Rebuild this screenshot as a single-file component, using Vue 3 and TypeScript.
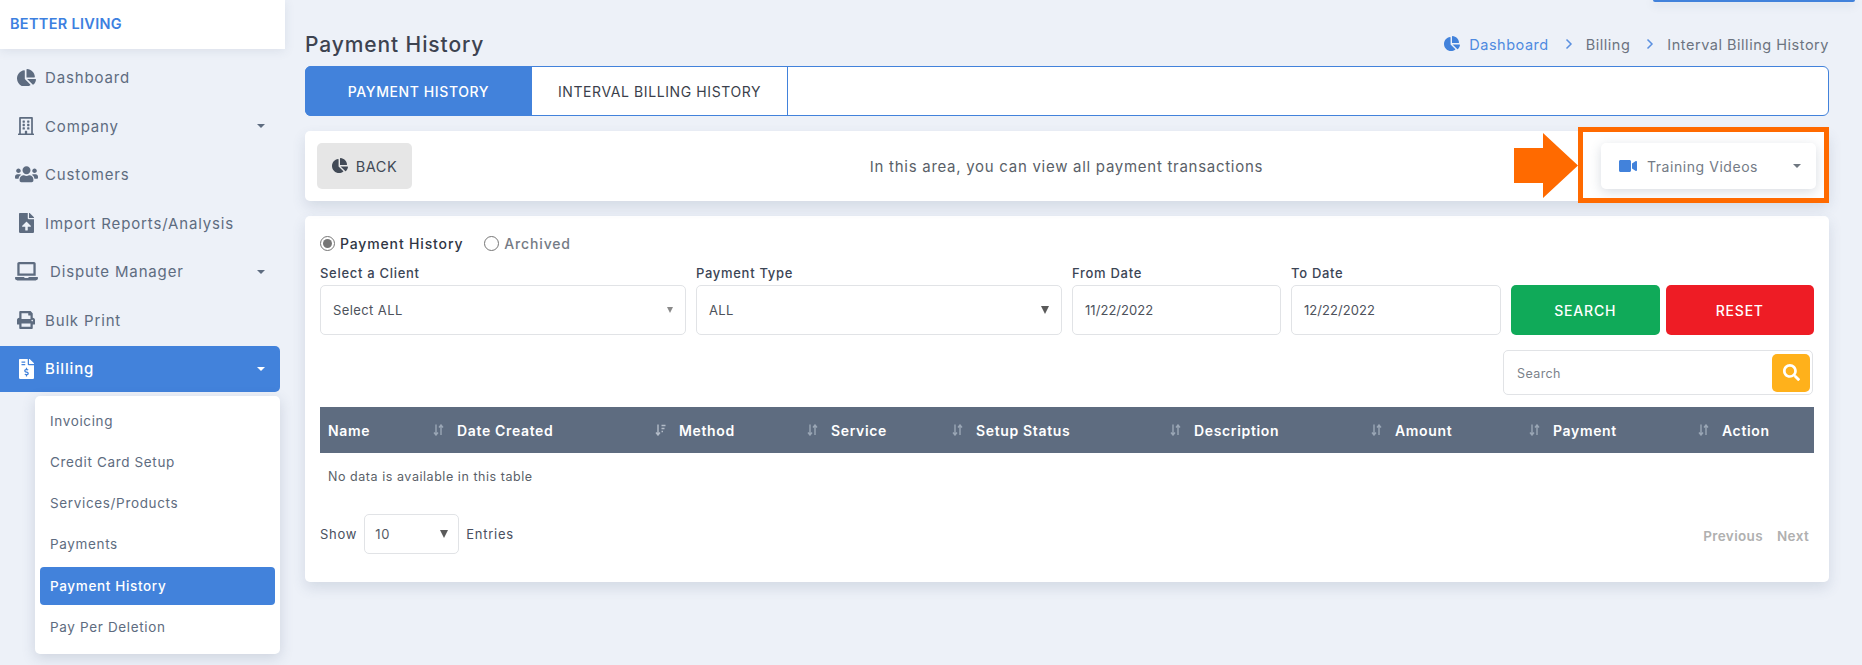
<script setup lang="ts">
type IconDef = { vb: string; d: string }
const icons: Record<string, IconDef> = {
  pie: { vb: '0 0 544 512', d: 'M527.79 288H290.5l158.03 158.03c6.04 6.04 15.98 6.53 22.19.68 38.7-36.46 65.32-85.61 73.13-140.86 1.34-9.46-6.51-17.85-16.06-17.85zm-15.83-64.8C503.72 103.74 408.26 8.28 288.8.04 279.68-.59 272 7.1 272 16.24V240h223.77c9.14 0 16.82-7.68 16.19-16.8zM224 288V50.71c0-9.55-8.39-17.4-17.84-16.06C86.99 51.49-4.1 155.6.14 280.37 4.5 408.51 114.83 513.59 243.03 511.98c50.4-.63 96.97-16.87 135.26-44.03 7.9-5.6 8.42-17.23 1.57-24.08L224 288z' },
  building: { vb: '0 0 448 512', d: 'M128 148v-40c0-6.6 5.4-12 12-12h40c6.6 0 12 5.4 12 12v40c0 6.6-5.4 12-12 12h-40c-6.6 0-12-5.4-12-12zm140 12h40c6.6 0 12-5.4 12-12v-40c0-6.6-5.4-12-12-12h-40c-6.6 0-12 5.4-12 12v40c0 6.6 5.4 12 12 12zm-128 96h40c6.6 0 12-5.4 12-12v-40c0-6.6-5.4-12-12-12h-40c-6.6 0-12 5.4-12 12v40c0 6.6 5.4 12 12 12zm128 0h40c6.6 0 12-5.4 12-12v-40c0-6.6-5.4-12-12-12h-40c-6.6 0-12 5.4-12 12v40c0 6.6 5.4 12 12 12zm-76 84v-40c0-6.6-5.4-12-12-12h-40c-6.6 0-12 5.4-12 12v40c0 6.6 5.4 12 12 12h40c6.6 0 12-5.4 12-12zm76 12h40c6.6 0 12-5.4 12-12v-40c0-6.6-5.4-12-12-12h-40c-6.6 0-12 5.4-12 12v40c0 6.6 5.4 12 12 12zm180 124v36H0v-36c0-6.6 5.4-12 12-12h19.5V24c0-13.3 10.7-24 24-24h337c13.3 0 24 10.7 24 24v440H436c6.6 0 12 5.4 12 12zM79.5 463H192v-67c0-6.6 5.4-12 12-12h40c6.6 0 12 5.4 12 12v67h112.5V49L80 48l-.5 415z' },
  users: { vb: '0 0 640 512', d: 'M96 224c35.3 0 64-28.7 64-64s-28.7-64-64-64-64 28.7-64 64 28.7 64 64 64zm448 0c35.3 0 64-28.7 64-64s-28.7-64-64-64-64 28.7-64 64 28.7 64 64 64zm32 32h-64c-17.6 0-33.5 7.1-45.1 18.6 40.3 22.1 68.9 62 75.1 109.4h66c17.7 0 32-14.3 32-32v-32c0-35.3-28.7-64-64-64zm-256 0c61.9 0 112-50.1 112-112S381.9 32 320 32 208 82.1 208 144s50.1 112 112 112zm76.8 32h-8.3c-20.8 10-43.9 16-68.5 16s-47.6-6-68.5-16h-8.3C179.6 288 128 339.6 128 403.2V432c0 26.5 21.5 48 48 48h288c26.5 0 48-21.5 48-48v-28.8c0-63.6-51.6-115.2-115.2-115.2zm-223.7-13.4C161.5 263.1 145.6 256 128 256H64c-35.3 0-64 28.7-64 64v32c0 17.7 14.3 32 32 32h65.9c6.3-47.4 34.9-87.3 75.2-109.4z' },
  upload: { vb: '0 0 384 512', d: 'M224 136V0H24C10.7 0 0 10.7 0 24v464c0 13.3 10.7 24 24 24h336c13.3 0 24-10.7 24-24V160H248c-13.2 0-24-10.8-24-24zm65.18 216.01H224v80c0 8.84-7.16 16-16 16h-32c-8.84 0-16-7.16-16-16v-80H94.82c-14.28 0-21.41-17.29-11.27-27.36l96.42-95.7c6.65-6.61 17.39-6.61 24.04 0l96.42 95.7c10.15 10.07 3.03 27.36-11.25 27.36zM377 105L279.1 7c-4.5-4.5-10.6-7-17-7H256v128h128v-6.1c0-6.3-2.5-12.4-7-16.9z' },
  laptop: { vb: '0 0 640 512', d: 'M624 416H381.54c-.74 19.81-14.71 32-32.74 32H288c-18.69 0-33.02-17.47-32.77-32H16c-8.8 0-16 7.2-16 16v16c0 35.2 28.8 64 64 64h512c35.2 0 64-28.8 64-64v-16c0-8.8-7.2-16-16-16zM576 48c0-26.4-21.6-48-48-48H112C85.6 0 64 21.6 64 48v336h512V48zm-64 272H128V64h384v256z' },
  print: { vb: '0 0 512 512', d: 'M448 192V77.25c0-8.49-3.37-16.62-9.37-22.63L393.37 9.37c-6-6-14.14-9.37-22.63-9.37H96C78.33 0 64 14.33 64 32v160c-35.35 0-64 28.65-64 64v112c0 8.84 7.16 16 16 16h48v96c0 17.67 14.33 32 32 32h320c17.67 0 32-14.33 32-32v-96h48c8.84 0 16-7.16 16-16V256c0-35.35-28.65-64-64-64zm-64 256H128v-96h256v96zm0-224H128V64h192v48c0 8.84 7.16 16 16 16h48v96zm48 72c-13.25 0-24-10.75-24-24 0-13.26 10.75-24 24-24s24 10.74 24 24c0 13.25-10.75 24-24 24z' },
  invoice: { vb: '0 0 384 512', d: 'M377 105L279.1 7c-4.5-4.5-10.6-7-17-7H256v128h128v-6.1c0-6.3-2.5-12.4-7-16.9zm-153 31V0H24C10.7 0 0 10.7 0 24v464c0 13.3 10.7 24 24 24h336c13.3 0 24-10.7 24-24V160H248c-13.2 0-24-10.8-24-24zM64 72c0-4.42 3.58-8 8-8h80c4.42 0 8 3.58 8 8v16c0 4.42-3.58 8-8 8H72c-4.42 0-8-3.58-8-8V72zm0 80v-16c0-4.42 3.58-8 8-8h80c4.42 0 8 3.58 8 8v16c0 4.42-3.58 8-8 8H72c-4.42 0-8-3.58-8-8zm144 263.88V440c0 4.42-3.58 8-8 8h-16c-4.42 0-8-3.58-8-8v-24.29c-11.29-.58-22.27-4.52-31.37-11.35-3.9-2.93-4.1-8.77-.57-12.14l11.75-11.21c2.77-2.64 6.89-2.76 10.13-.73 3.87 2.42 8.26 3.72 12.82 3.72h28.11c6.5 0 11.8-5.92 11.8-13.19 0-5.95-3.61-11.19-8.77-12.73l-45-13.5c-18.59-5.58-31.58-23.42-31.58-43.39 0-24.52 19.05-44.44 42.67-45.07V232c0-4.42 3.58-8 8-8h16c4.42 0 8 3.58 8 8v24.29c11.29.58 22.27 4.51 31.37 11.35 3.9 2.93 4.1 8.77.57 12.14l-11.75 11.21c-2.77 2.64-6.89 2.76-10.13.73-3.87-2.43-8.26-3.72-12.82-3.72h-28.11c-6.5 0-11.8 5.92-11.8 13.19 0 5.95 3.61 11.19 8.77 12.73l45 13.5c18.59 5.58 31.58 23.42 31.58 43.39 0 24.53-19.05 44.44-42.67 45.07z' },
  video: { vb: '0 0 576 512', d: 'M336.2 64H47.8C21.4 64 0 85.4 0 111.8v288.4C0 426.6 21.4 448 47.8 448h288.4c26.4 0 47.8-21.4 47.8-47.8V111.8c0-26.4-21.4-47.8-47.8-47.8zm189.4 37.7L416 177.3v157.4l109.6 75.5c21.2 14.6 50.4-.3 50.4-25.8V127.5c0-25.4-29.1-40.4-50.4-25.8z' },
  search: { vb: '0 0 512 512', d: 'M505 442.7L405.3 343c-4.5-4.5-10.6-7-17-7H372c27.6-35.3 44-79.7 44-128C416 93.1 322.9 0 208 0S0 93.1 0 208s93.1 208 208 208c48.3 0 92.7-16.4 128-44v16.3c0 6.4 2.5 12.5 7 17l99.7 99.7c9.4 9.4 24.6 9.4 33.9 0l28.3-28.3c9.4-9.4 9.4-24.6.1-34zM208 336c-70.7 0-128-57.2-128-128 0-70.7 57.2-128 128-128 70.7 0 128 57.2 128 128 0 70.7-57.2 128-128 128z' },
}

const navItems = [
  { label: 'Dashboard', icon: 'pie', w: 19, caret: false, wide: false },
  { label: 'Company', icon: 'building', w: 16, caret: true, wide: false },
  { label: 'Customers', icon: 'users', w: 23, caret: false, wide: false },
  { label: 'Import Reports/Analysis', icon: 'upload', w: 15, caret: false, wide: false },
  { label: 'Dispute Manager', icon: 'laptop', w: 23, caret: true, wide: true },
  { label: 'Bulk Print', icon: 'print', w: 18, caret: false, wide: false },
]
const subItems = ['Invoicing', 'Credit Card Setup', 'Services/Products', 'Payments', 'Payment History', 'Pay Per Deletion']
const columns = ['Name', 'Date Created', 'Method', 'Service', 'Setup Status', 'Description', 'Amount', 'Payment', 'Action']
</script>

<template>
  <div class="page">
    <div class="top-strip"></div>
    <aside class="sidebar">
      <div class="brand">BETTER LIVING</div>
      <nav class="nav">
        <a v-for="item in navItems" :key="item.label" class="nav-item">
          <span class="nav-icon" :class="{ wide: item.wide }">
            <svg :viewBox="icons[item.icon].vb" :width="item.w" fill="currentColor"><path :d="icons[item.icon].d" /></svg>
          </span>
          <span class="nav-label">{{ item.label }}</span>
          <span v-if="item.caret" class="caret"></span>
        </a>
        <a class="nav-item active">
          <span class="nav-icon">
            <svg :viewBox="icons.invoice.vb" width="15" fill="currentColor"><path :d="icons.invoice.d" /></svg>
          </span>
          <span class="nav-label">Billing</span>
          <span class="caret"></span>
        </a>
        <div class="submenu">
          <a v-for="sub in subItems" :key="sub" class="sub-item" :class="{ current: sub === 'Payment History' }">{{ sub }}</a>
        </div>
      </nav>
    </aside>

    <main class="main">
      <header class="head">
        <h1>Payment History</h1>
        <div class="crumbs">
          <svg :viewBox="icons.pie.vb" width="16" fill="currentColor" class="crumb-icon"><path :d="icons.pie.d" /></svg>
          <span class="crumb-link">Dashboard</span>
          <svg class="chev" viewBox="0 0 8 12" width="8" height="12"><path d="M1.5 1.5 6 6l-4.500 4.500" fill="none" stroke="currentColor" stroke-width="1.500" /></svg>
          <span>Billing</span>
          <svg class="chev" viewBox="0 0 8 12" width="8" height="12"><path d="M1.5 1.5 6 6l-4.500 4.500" fill="none" stroke="currentColor" stroke-width="1.500" /></svg>
          <span>Interval Billing History</span>
        </div>
      </header>

      <div class="tabs">
        <div class="tab tab-on">PAYMENT HISTORY</div>
        <div class="tab tab-off">INTERVAL BILLING HISTORY</div>
      </div>

      <section class="card info">
        <div class="back"><svg :viewBox="icons.pie.vb" width="16" fill="currentColor"><path :d="icons.pie.d" /></svg>BACK</div>
        <p class="info-text">In this area, you can view all payment transactions</p>
        <div class="training">
          <svg :viewBox="icons.video.vb" width="18" fill="#4282db"><path :d="icons.video.d" /></svg>
          <span>Training Videos</span>
          <span class="caret grey"></span>
        </div>
        <svg class="arrow" viewBox="0 0 64 65" width="64" height="65"><path d="M0 15h29V0l35 32.500L29 65V50H0z" fill="#ff6a00" /></svg>
        <div class="highlight"></div>
      </section>

      <section class="card panel">
        <div class="radios">
          <label class="radio on"><span class="dot"></span>Payment History</label>
          <label class="radio"><span class="dot"></span>Archived</label>
        </div>

        <div class="filters">
          <div class="field">
            <label>Select a Client</label>
            <div class="input"><span>Select ALL</span><i class="tri light"></i></div>
          </div>
          <div class="field">
            <label>Payment Type</label>
            <div class="input"><span>ALL</span><i class="tri"></i></div>
          </div>
          <div class="field">
            <label>From Date</label>
            <div class="input date"><span>11/22/2022</span></div>
          </div>
          <div class="field">
            <label>To Date</label>
            <div class="input date"><span>12/22/2022</span></div>
          </div>
          <div class="actions">
            <button class="btn green" type="button">SEARCH</button>
            <button class="btn red" type="button">RESET</button>
          </div>
        </div>

        <div class="search-row">
          <div class="search">
            <span class="placeholder">Search</span>
            <span class="search-btn"><svg :viewBox="icons.search.vb" width="17" fill="#fff"><path :d="icons.search.d" /></svg></span>
          </div>
        </div>

        <div class="thead">
          <div v-for="c in columns" :key="c" class="th">
            <span>{{ c }}</span>
            <svg v-if="c === 'Date Created'" class="sort" viewBox="0 0 11 12" width="11" height="12">
              <path d="M3 0.500v10M1 8.500l2 2.500 2-2.500M6.500 1.500H10.500M6.500 4.500H9.500M6.500 7.500H8" fill="none" stroke="#b3bcc8" stroke-width="1.400" />
            </svg>
            <svg v-else-if="c !== 'Action'" class="sort" viewBox="0 0 11 12" width="11" height="12">
              <path d="M3 0.500v10M1 8.500l2 2.500 2-2.500M8 11V1M6 3.500 8 1l2 2.500" fill="none" stroke="#9aa6b5" stroke-width="1.400" />
            </svg>
          </div>
        </div>
        <div class="empty">No data is available in this table</div>

        <div class="foot">
          <div class="show">
            <span>Show</span>
            <div class="size"><span>10</span><i class="tri"></i></div>
            <span>Entries</span>
          </div>
          <div class="pager"><span>Previous</span><span>Next</span></div>
        </div>
      </section>
    </main>
  </div>
</template>

<style>
html, body { margin: 0; background: #edf1f8; }
</style>

<style scoped>
.page {
  position: relative;
  display: flex;
  width: 1862px;
  height: 665px;
  overflow: hidden;
  background: #edf1f8;
  font-family: Inter, "Liberation Sans", sans-serif;
  color: #3d4756;
}
.top-strip {
  position: absolute;
  top: 0;
  left: 1653px;
  width: 202px;
  height: 2px;
  background: #4282db;
  border-radius: 0 0 3px 3px;
  box-shadow: 0 2px 10px rgba(60, 80, 110, .25);
}
.sidebar { width: 305px; flex: none; }
.brand {
  width: 285px;
  height: 49px;
  box-sizing: border-box;
  padding-left: 10px;
  line-height: 48px;
  background: #fff;
  color: #3d80e0;
  font-size: 14.500px;
  font-weight: 600;
  letter-spacing: .3px;
  box-shadow: 0 2px 10px rgba(60, 80, 110, .1);
}
.nav { padding-top: 5.500px; }
.nav-item {
  display: flex;
  align-items: center;
  width: 280px;
  height: 46px;
  margin-bottom: 2.500px;
  color: #5e6c80;
  font-size: 15px;
  letter-spacing: .85px;
  border-radius: 0 5px 5px 0;
  box-sizing: border-box;
  padding-left: 14px;
}
.nav-icon {
  display: flex;
  justify-content: center;
  width: 24px;
  margin-right: 7px;
  flex: none;
}
.nav-icon.wide { margin-right: 12px; }
.nav-icon svg { display: block; }
.nav-label { flex: 1; }
.caret {
  width: 0;
  height: 0;
  margin-right: 15px;
  border-left: 4.500px solid transparent;
  border-right: 4.500px solid transparent;
  border-top: 4.500px solid currentColor;
}
.nav-item.active { background: #4282db; color: #fff; margin-bottom: 4px; font-weight: 500; }
.submenu {
  width: 245px;
  margin-left: 35px;
  padding: 6px 5px 8px;
  box-sizing: border-box;
  background: #fff;
  border-radius: 5px;
  box-shadow: 0 4px 14px rgba(60, 80, 110, .18);
}
.sub-item {
  display: block;
  height: 38px;
  line-height: 38px;
  padding-left: 10px;
  margin-bottom: 3.300px;
  border-radius: 4px;
  color: #5e6c80;
  font-size: 13.500px;
  letter-spacing: .65px;
}
.sub-item:last-child { margin-bottom: 0; }
.sub-item.current { background: #4282db; color: #fff; font-weight: 500; }

.main { width: 1524px; padding-top: 28px; flex: none; }
.head {
  display: flex;
  align-items: center;
  justify-content: space-between;
  height: 32px;
  margin-bottom: 6px;
}
h1 {
  margin: 0;
  font-size: 21px;
  font-weight: 500;
  letter-spacing: .9px;
  color: #3d4350;
}
.crumbs {
  display: flex;
  align-items: center;
  font-size: 14.500px;
  letter-spacing: .52px;
  color: #6c7480;
}
.crumb-icon { color: #4282db; margin-right: 9px; }
.crumb-link { color: #4f8ae0; }
.chev { color: #5b90e0; margin: 0 13px 0 16px; }

.tabs {
  display: flex;
  height: 50px;
  box-sizing: border-box;
  background: #fff;
  border: 1px solid #4282db;
  border-radius: 6px;
}
.tab {
  display: flex;
  align-items: center;
  justify-content: center;
  font-size: 14px;
  letter-spacing: .6px;
}
.tab-on {
  width: 227px;
  margin: -1px 0 -1px -1px;
  background: #4282db;
  color: #fff;
  font-weight: 500;
  border-radius: 6px 0 0 6px;
}
.tab-off { width: 256px; border-right: 1px solid #4282db; color: #3b3f4c; box-sizing: border-box; }

.card {
  background: #fff;
  border-radius: 5px;
  box-shadow: 0 6px 14px rgba(60, 80, 110, .14);
}
.info {
  position: relative;
  display: grid;
  grid-template-columns: 1fr auto 1fr;
  align-items: center;
  height: 70px;
  margin-top: 15px;
  padding: 0 13px 0 12px;
  box-sizing: border-box;
}
.back {
  display: flex;
  align-items: center;
  justify-content: center;
  gap: 8px;
  width: 95px;
  height: 46px;
  background: #e6e6e6;
  border-radius: 5px;
  font-size: 14.500px;
  letter-spacing: .6px;
  color: #424a56;
}
.info-text {
  margin: 0;
  font-size: 15px;
  letter-spacing: .72px;
  color: #5a5f68;
}
.training {
  justify-self: end;
  display: flex;
  align-items: center;
  width: 215px;
  height: 46px;
  box-sizing: border-box;
  padding-left: 18px;
  background: #fff;
  border-radius: 5px;
  box-shadow: 0 3px 12px rgba(60, 80, 110, .2);
  font-size: 14px;
  letter-spacing: .55px;
  color: #747b86;
}
.training span:first-of-type { margin-left: 10px; flex: 1; }
.caret.grey { color: #6f7780; margin-right: 15px; }
.arrow { position: absolute; left: 1209px; top: 2px; }
.highlight {
  position: absolute;
  right: 0;
  top: -4px;
  width: 251px;
  height: 76px;
  box-sizing: border-box;
  border: 5px solid #ff6a00;
}

.panel {
  height: 366px;
  margin-top: 15px;
  padding: 18px 15px 0;
  box-sizing: border-box;
}
.radios { display: flex; gap: 21px; height: 18px; font-size: 14px; letter-spacing: .85px; }
.radio { display: flex; align-items: center; gap: 5px; color: #757b85; font-weight: 500; }
.radio.on { color: #2f3644; }
.dot {
  position: relative;
  width: 13px;
  height: 13px;
  border: 1px solid #767676;
  border-radius: 50%;
  background: #fff;
}
.radio.on .dot::after {
  content: "";
  position: absolute;
  inset: 2px;
  border-radius: 50%;
  background: #767676;
}
.filters {
  display: grid;
  grid-template-columns: 366px 366px 209px 210px 1fr;
  column-gap: 10px;
  margin-top: 13px;
}
.field label {
  display: block;
  height: 20px;
  line-height: 16px;
  font-size: 13px;
  font-weight: 500;
  letter-spacing: .7px;
  color: #3b4555;
}
.input {
  display: flex;
  align-items: center;
  justify-content: space-between;
  height: 50px;
  box-sizing: border-box;
  padding: 0 12px;
  border: 1px solid #e1e3e6;
  border-radius: 5px;
  font-size: 13px;
  letter-spacing: .4px;
  color: #4d525b;
}
.input.date { letter-spacing: .05px; }
.tri {
  width: 0;
  height: 0;
  border-left: 4px solid transparent;
  border-right: 4px solid transparent;
  border-top: 8px solid #5a5a5a;
}
.tri.light { border-left-width: 3.500px; border-right-width: 3.500px; border-top-width: 6px; border-top-color: #8a8a8a; }
.actions { display: flex; gap: 6px; margin-top: 20px; height: 50px; }
.btn {
  flex: 1;
  border: 0;
  border-radius: 5px;
  color: #fff;
  font: 500 14px Inter, "Liberation Sans", sans-serif;
  letter-spacing: .8px;
}
.green { background: #10aa59; }
.red { background: #ee1c25; }
.search-row { display: flex; justify-content: flex-end; margin-top: 15px; }
.search {
  display: flex;
  align-items: center;
  justify-content: space-between;
  width: 310px;
  height: 45px;
  box-sizing: border-box;
  margin-right: 1px;
  padding: 0 2px 0 13px;
  border: 1px solid #e1e3e6;
  border-radius: 5px;
  font-size: 12.500px;
  letter-spacing: .4px;
  color: #7c828b;
}
.placeholder { padding-top: 2px; }
.search-btn {
  display: flex;
  align-items: center;
  justify-content: center;
  width: 38px;
  height: 38px;
  background: #ffb11b;
  border-radius: 5px;
}
.thead {
  display: grid;
  grid-template-columns: 129px 222px 152px 145px 218px 201px 158px 169px 100px;
  height: 46px;
  margin-top: 12px;
  background: #5e6c80;
  color: #fff;
  font-size: 14px;
  font-weight: 600;
  letter-spacing: .65px;
}
.th {
  display: flex;
  align-items: center;
  justify-content: space-between;
  padding: 0 5px 0 8px;
}
.empty {
  height: 46px;
  line-height: 48px;
  padding-left: 8px;
  font-size: 12.500px;
  letter-spacing: .55px;
  color: #5a5f68;
}
.foot {
  display: flex;
  justify-content: space-between;
  margin-top: 15px;
}
.show {
  display: flex;
  align-items: center;
  gap: 7px;
  font-size: 13px;
  letter-spacing: .75px;
  color: #4a5060;
}
.size {
  display: flex;
  align-items: center;
  justify-content: space-between;
  width: 95px;
  height: 40px;
  box-sizing: border-box;
  padding: 0 10px;
  border: 1px solid #e1e3e6;
  border-radius: 5px;
  color: #555b66;
}
.pager {
  display: flex;
  gap: 14px;
  padding: 4px 5px 0 0;
  align-items: center;
  font-size: 13.500px;
  font-weight: 600;
  letter-spacing: .35px;
  color: #b0b0b0;
}
</style>
